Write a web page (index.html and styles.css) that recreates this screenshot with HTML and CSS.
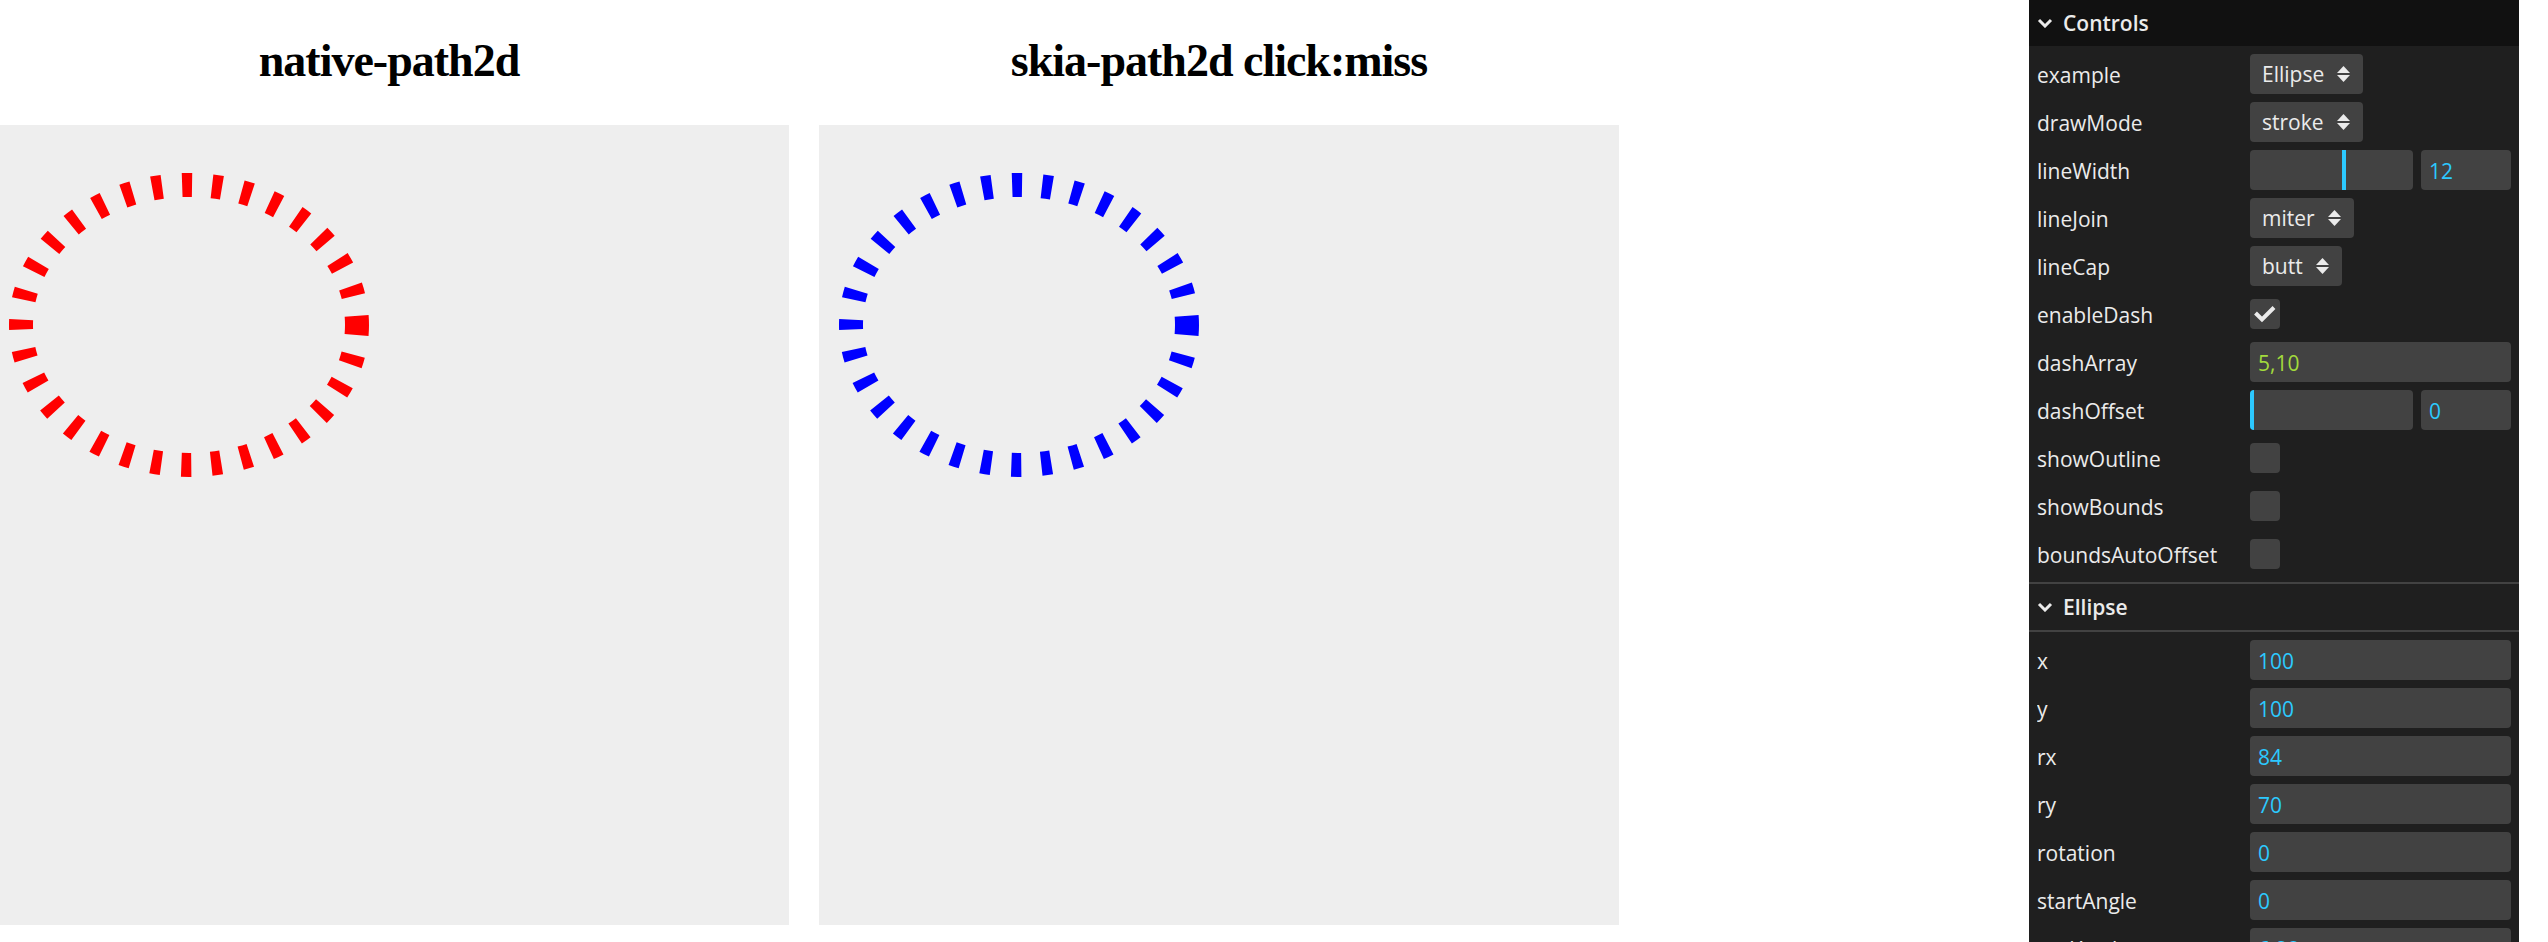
FILE: index.html
```html
<!DOCTYPE html>
<html>
<head>
<meta charset="utf-8">
<title>path2d</title>
<link rel="stylesheet" href="styles.css">
</head>
<body>
<main class="page">
  <section class="view">
    <h2 class="view-title">native-path2d</h2>
    <div class="canvas">
      <svg class="drawing" viewBox="0 0 400 400" width="800" height="800">
        <path class="ellipse red" d="M184,100 A84,70 0 0 1 100,170 A84,70 0 0 1 16,100 A84,70 0 0 1 100,30 A84,70 0 0 1 184,100"/>
      </svg>
    </div>
  </section>
  <section class="view">
    <h2 class="view-title">skia-path2d click:miss</h2>
    <div class="canvas">
      <svg class="drawing" viewBox="0 0 400 400" width="800" height="800">
        <path class="ellipse blue" d="M184,100 A84,70 0 0 1 100,170 A84,70 0 0 1 16,100 A84,70 0 0 1 100,30 A84,70 0 0 1 184,100"/>
      </svg>
    </div>
  </section>
</main>

<aside class="gui">
  <div class="gui-title">
    <svg class="chev" viewBox="0 0 16 10" width="16" height="10"><polyline points="2,2 8,8 14,2"/></svg>
    <span>Controls</span>
  </div>
  <div class="gui-children">
    <div class="ctrl"><div class="name">example</div><div class="widget"><div class="select"><span>Ellipse</span><svg class="updown" viewBox="0 0 13 16" width="13" height="16"><polygon points="0,7 6.5,0 13,7"/><polygon points="0,9 13,9 6.5,16"/></svg></div></div></div>
    <div class="ctrl"><div class="name">drawMode</div><div class="widget"><div class="select"><span>stroke</span><svg class="updown" viewBox="0 0 13 16" width="13" height="16"><polygon points="0,7 6.5,0 13,7"/><polygon points="0,9 13,9 6.5,16"/></svg></div></div></div>
    <div class="ctrl"><div class="name">lineWidth</div><div class="widget"><div class="slider"><div class="fill" style="width:59%"></div></div><div class="input num short">12</div></div></div>
    <div class="ctrl"><div class="name">lineJoin</div><div class="widget"><div class="select"><span>miter</span><svg class="updown" viewBox="0 0 13 16" width="13" height="16"><polygon points="0,7 6.5,0 13,7"/><polygon points="0,9 13,9 6.5,16"/></svg></div></div></div>
    <div class="ctrl"><div class="name">lineCap</div><div class="widget"><div class="select"><span>butt</span><svg class="updown" viewBox="0 0 13 16" width="13" height="16"><polygon points="0,7 6.5,0 13,7"/><polygon points="0,9 13,9 6.5,16"/></svg></div></div></div>
    <div class="ctrl"><div class="name">enableDash</div><div class="widget"><div class="checkbox"><svg viewBox="0 0 30 30" width="30" height="30"><polyline points="5.5,14 12,20.5 24,8.5"/></svg></div></div></div>
    <div class="ctrl"><div class="name">dashArray</div><div class="widget"><div class="input str">5,10</div></div></div>
    <div class="ctrl"><div class="name">dashOffset</div><div class="widget"><div class="slider"><div class="fill" style="width:0%"></div></div><div class="input num short">0</div></div></div>
    <div class="ctrl"><div class="name">showOutline</div><div class="widget"><div class="checkbox"></div></div></div>
    <div class="ctrl"><div class="name">showBounds</div><div class="widget"><div class="checkbox"></div></div></div>
    <div class="ctrl"><div class="name">boundsAutoOffset</div><div class="widget"><div class="checkbox"></div></div></div>
  </div>
  <div class="folder">
    <div class="gui-title sub">
      <svg class="chev" viewBox="0 0 16 10" width="16" height="10"><polyline points="2,2 8,8 14,2"/></svg>
      <span>Ellipse</span>
    </div>
    <div class="gui-children">
      <div class="ctrl"><div class="name">x</div><div class="widget"><div class="input num">100</div></div></div>
      <div class="ctrl"><div class="name">y</div><div class="widget"><div class="input num">100</div></div></div>
      <div class="ctrl"><div class="name">rx</div><div class="widget"><div class="input num">84</div></div></div>
      <div class="ctrl"><div class="name">ry</div><div class="widget"><div class="input num">70</div></div></div>
      <div class="ctrl"><div class="name">rotation</div><div class="widget"><div class="input num">0</div></div></div>
      <div class="ctrl"><div class="name">startAngle</div><div class="widget"><div class="input num">0</div></div></div>
      <div class="ctrl"><div class="name">endAngle</div><div class="widget"><div class="input num">6.28</div></div></div>
    </div>
  </div>
</aside>
</body>
</html>
```

FILE: styles.css
```css
html, body {
  margin: 0;
  padding: 0;
  background: #ffffff;
  overflow: hidden;
}

.page {
  display: flex;
  gap: 30px;
  margin-left: -11px;
}

.view {
  width: 800px;
  display: flex;
  flex-direction: column;
  flex-shrink: 0;
}

.view-title {
  margin: 0 0 4px 0;
  height: 121px;
  line-height: 121px;
  text-align: center;
  font-family: "Liberation Serif", "Times New Roman", serif;
  font-weight: 700;
  font-size: 46px;
  letter-spacing: -1px;
  color: #000;
}

.canvas {
  width: 800px;
  height: 800px;
  background: #eeeeee;
}

.drawing {
  display: block;
}

.ellipse {
  fill: none;
  stroke-width: 12;
  stroke-dasharray: 5 10;
  stroke-linecap: butt;
  stroke-linejoin: miter;
}
.ellipse.red { stroke: #ff0000; }
.ellipse.blue { stroke: #0000ff; }

/* GUI panel */
.gui {
  position: fixed;
  top: 0;
  right: 29px;
  width: 490px;
  height: 100vh;
  overflow: hidden;
  background: #1f1f1f;
  color: #ebebeb;
  font-family: "Open Sans", "Noto Sans", sans-serif;
  font-size: 21px;
}

.gui-title {
  height: 46px;
  display: flex;
  align-items: center;
  padding: 0 8px;
  background: #111111;
  font-weight: 600;
  font-size: 21px;
}
.gui-title.sub {
  background: #1f1f1f;
  border-top: 2px solid #424242;
  border-bottom: 2px solid #424242;
}

.chev {
  margin-right: 10px;
  flex-shrink: 0;
}
.chev polyline {
  fill: none;
  stroke: #ebebeb;
  stroke-width: 3;
}

.gui-children {
  display: flex;
  flex-direction: column;
  gap: 8px;
  padding: 8px 0;
}

.ctrl {
  display: flex;
  align-items: center;
  height: 40px;
  padding: 0 8px;
}

.name {
  width: 213px;
  height: 40px;
  flex-shrink: 0;
  line-height: 42px;
  white-space: nowrap;
  overflow: hidden;
}

.widget {
  flex: 1;
  min-width: 0;
  display: flex;
  align-items: center;
  gap: 8px;
  height: 40px;
}

.select {
  display: inline-flex;
  align-items: center;
  height: 40px;
  padding: 0 13px 0 12px;
  background: #424242;
  border-radius: 4px;
  white-space: nowrap;
}
.updown {
  margin-left: 13px;
}
.updown polygon {
  fill: #ebebeb;
}

.slider {
  flex: 1;
  height: 40px;
  background: #424242;
  border-radius: 4px;
  overflow: hidden;
}
.fill {
  box-sizing: border-box;
  height: 100%;
  min-width: 4px;
  border-right: 4px solid #2cc9ff;
}

.input {
  flex: 1;
  min-width: 0;
  height: 40px;
  line-height: 42px;
  padding-left: 8px;
  background: #424242;
  border-radius: 4px;
  white-space: nowrap;
  overflow: hidden;
}
.input.short {
  flex: 0 0 82px;
}
.input.num { color: #2cc9ff; }
.input.str { color: #a2db3c; }

.checkbox {
  width: 30px;
  height: 30px;
  background: #424242;
  border-radius: 4px;
}
.checkbox svg {
  display: block;
}
.checkbox polyline {
  fill: none;
  stroke: #ebebeb;
  stroke-width: 4;
}
```
